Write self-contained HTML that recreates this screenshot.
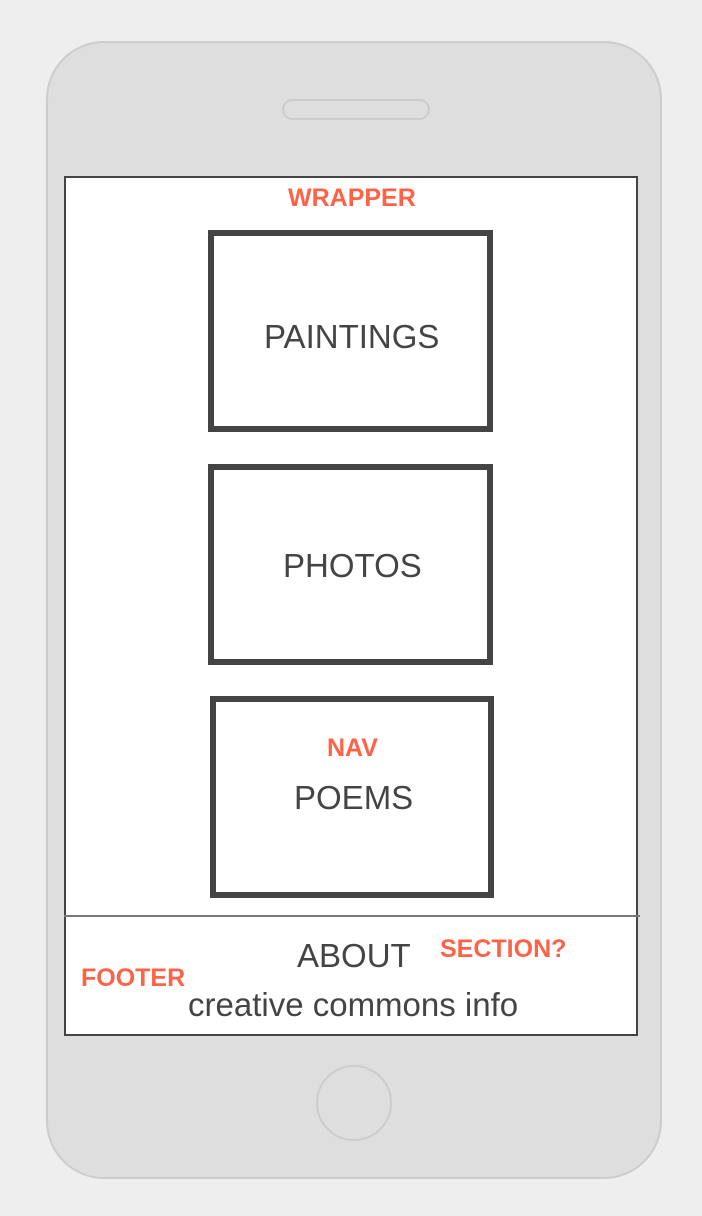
<!DOCTYPE html><html><head><style>
body{margin:0;width:702px;height:1216px;background:#eeeeee;position:relative;font-family:"Liberation Sans",sans-serif;overflow:hidden}
.a{position:absolute;box-sizing:border-box}
.r{color:#ff6347;font-weight:bold;font-size:25px;position:absolute;white-space:nowrap}
.t{color:#444;font-size:33px;position:absolute;white-space:nowrap}
.b{position:absolute;box-sizing:border-box;border:6px solid #444;background:#fff}
</style></head><body>
<div class="a" style="left:46px;top:41px;width:616px;height:1138px;background:#dedede;border:2px solid #ccc;border-radius:58px"></div>
<div class="a" style="left:282px;top:99px;width:148px;height:21px;border:2px solid #ccc;border-radius:11px"></div>
<div class="a" style="left:316px;top:1065px;width:76px;height:76px;border:2px solid #ccc;border-radius:50%"></div>
<div class="a" style="left:64px;top:176px;width:574px;height:860px;background:#fff;border:2px solid #444"></div>
<div class="a" style="left:64px;top:915px;width:576px;height:2px;background:#777"></div>
<div class="r" style="left:288px;top:184px">WRAPPER</div>
<div class="b" style="left:208px;top:230px;width:285px;height:202px"></div>
<div class="t" style="left:264px;top:318px">PAINTINGS</div>
<div class="b" style="left:208px;top:464px;width:285px;height:201px"></div>
<div class="t" style="left:283px;top:547px">PHOTOS</div>
<div class="b" style="left:210px;top:696px;width:284px;height:202px"></div>
<div class="r" style="left:327px;top:734px">NAV</div>
<div class="t" style="left:294px;top:779px">POEMS</div>
<div class="t" style="left:297px;top:937px">ABOUT</div>
<div class="r" style="left:440px;top:935px">SECTION?</div>
<div class="r" style="left:81px;top:964px">FOOTER</div>
<div class="t" style="left:188px;top:986px">creative commons info</div>
</body></html>
